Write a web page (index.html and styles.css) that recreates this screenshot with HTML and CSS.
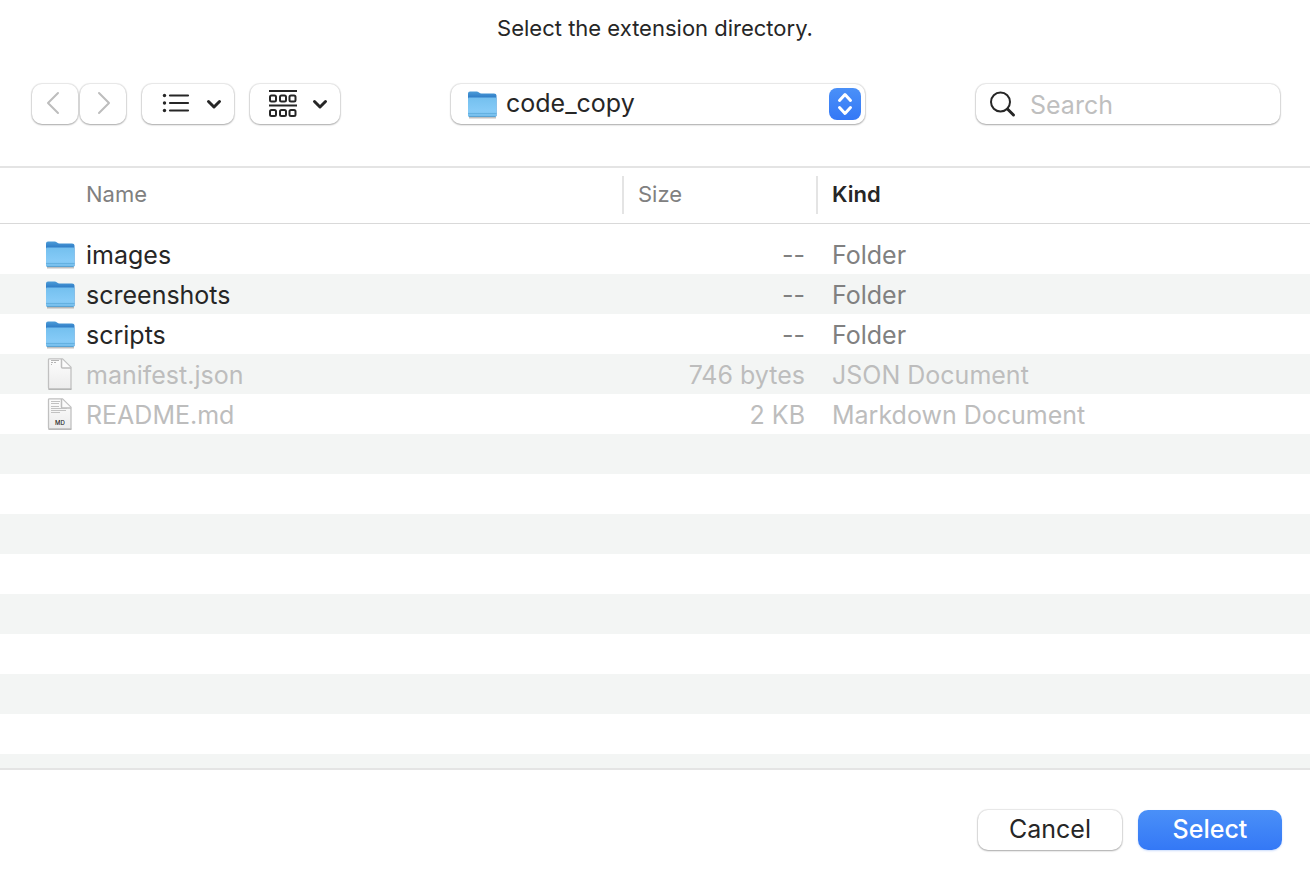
FILE: index.html
```html
<!DOCTYPE html>
<html lang="en">
<head>
<meta charset="utf-8">
<meta name="viewport" content="width=device-width, initial-scale=1">
<title>Select the extension directory.</title>
<link rel="stylesheet" href="styles.css">
</head>
<body>
<svg class="defs" aria-hidden="true">
  <defs>
    <linearGradient id="folder-back" x1="0" y1="0" x2="0" y2="1">
      <stop offset="0" stop-color="#4b9cd8"/><stop offset=".25" stop-color="#2f7cc6"/>
    </linearGradient>
    <linearGradient id="folder-front" x1="0" y1="0" x2="0" y2="1">
      <stop offset="0" stop-color="#74c0ef"/><stop offset=".7" stop-color="#86cbf7"/><stop offset="1" stop-color="#72bbe9"/>
    </linearGradient>
    <linearGradient id="paper" x1="0" y1="0" x2="0" y2="1">
      <stop offset="0" stop-color="#fdfdfd"/><stop offset="1" stop-color="#ececec"/>
    </linearGradient>
    <symbol id="folder" viewBox="0 0 32 32">
      <path d="M3 29.500h27" stroke="#000" stroke-opacity=".25" stroke-width="2"/>
      <path d="M2 5.500Q2 3.500 4 3.500h6.500q1.500 0 2.500 1t2.500 1h12.500q2.500 0 2.500 2V28H2z" fill="url(#folder-back)"/>
      <path d="M2 10.500Q2 9.500 3 9.500h26.500q1 0 1 1V27.500q0 1.500-1.500 1.500H3.500Q2 29 2 27.500z" fill="url(#folder-front)"/>
      <path d="M2 25.500h28.500" stroke="#64b1e1" stroke-width="1"/>
      <path d="M3 28.500h26.500" stroke="#5aa3d3" stroke-width="1"/>
    </symbol>
    <symbol id="page" viewBox="0 0 32 32">
      <path d="M4.500 31h23" stroke="#000" stroke-opacity=".4" stroke-width="1.500"/>
      <path d="M4.500 1.500Q4.500.8 5.500.8h13l8.500 8.500v20.500q0 1-1 1H5.500q-1 0-1-1z" fill="url(#paper)" stroke="#c0c0c0" stroke-width="1.300"/>
      <path d="M17.500 1v8q0 1 1 1H27" fill="#fbfbfb" stroke="#bdbdbd" stroke-width="1.500"/>
    </symbol>
  </defs>
</svg>
<main class="dialog">
  <h1 class="title">Select the extension directory.</h1>

  <div class="toolbar">
    <div class="tools">
      <div class="nav">
        <button class="control nav-button back" type="button" aria-label="Back" disabled>
          <svg width="14" height="24" viewBox="0 0 14 24"><path d="M12 2 2 12l10 10"/></svg>
        </button>
        <button class="control nav-button forward" type="button" aria-label="Forward" disabled>
          <svg width="14" height="24" viewBox="0 0 14 24"><path d="M2 2l10 10L2 22"/></svg>
        </button>
      </div>
      <button class="control menu-button" type="button" aria-label="View as list">
        <svg width="28" height="22" viewBox="0 0 28 22"><g fill="#262626"><circle cx="2.500" cy="2.500" r="1.700"/><circle cx="2.500" cy="10" r="1.700"/><circle cx="2.500" cy="17.500" r="1.700"/></g><path d="M8 2.500h18M8 10h18M8 17.500h18" stroke="#262626" stroke-width="2.200" stroke-linecap="round"/></svg>
        <svg class="caret" width="16" height="12" viewBox="0 0 16 12"><path d="M2.500 3.500 8 9 13.500 3.500"/></svg>
      </button>
      <button class="control menu-button group-button" type="button" aria-label="Group items">
        <svg width="30" height="30" viewBox="0 0 30 30" fill="none" stroke="#262626" stroke-width="2"><path d="M1 2h28M1 16.500h28"/><rect x="2" y="6.500" width="6" height="6" rx="1.500"/><rect x="12" y="6.500" width="6" height="6" rx="1.500"/><rect x="21.500" y="6.500" width="6" height="6" rx="1.500"/><rect x="2" y="21" width="6" height="6" rx="1.500"/><rect x="12" y="21" width="6" height="6" rx="1.500"/><rect x="21.500" y="21" width="6" height="6" rx="1.500"/></svg>
        <svg class="caret" width="16" height="12" viewBox="0 0 16 12"><path d="M2.500 3.500 8 9 13.500 3.500"/></svg>
      </button>
    </div>

    <div class="location">
      <svg class="location-icon" width="32" height="32" aria-hidden="true"><use href="#folder"/></svg>
      <select class="control location-select" aria-label="Current folder"><option>code_copy</option></select>
      <span class="stepper" aria-hidden="true">
        <svg width="32" height="32" viewBox="0 0 32 32"><path d="m10.500 12.500 5.500-6 5.500 6M10.500 19.500l5.500 6 5.500-6"/></svg>
      </span>
    </div>

    <label class="control search">
      <svg width="28" height="28" viewBox="0 0 28 28" aria-hidden="true"><circle cx="12.500" cy="12" r="9.500"/><path d="m19.500 19 6 6" stroke-width="3"/></svg>
      <input class="search-input" type="search" placeholder="Search" aria-label="Search">
    </label>
  </div>

  <div class="listing">
    <table class="files">
      <colgroup><col><col class="col-size"><col class="col-kind"></colgroup>
      <thead>
        <tr>
          <th scope="col"><span class="heading heading-name">Name</span></th>
          <th scope="col"><span class="heading divided">Size</span></th>
          <th scope="col" aria-sort="ascending"><span class="heading divided sorted">Kind</span></th>
        </tr>
      </thead>
      <tbody>
        <tr><td><span class="file"><svg width="32" height="32"><use href="#folder"/></svg>images</span></td><td class="size">--</td><td class="kind">Folder</td></tr>
        <tr><td><span class="file"><svg width="32" height="32"><use href="#folder"/></svg>screenshots</span></td><td class="size">--</td><td class="kind">Folder</td></tr>
        <tr><td><span class="file"><svg width="32" height="32"><use href="#folder"/></svg>scripts</span></td><td class="size">--</td><td class="kind">Folder</td></tr>
        <tr class="unavailable"><td><span class="file"><svg width="32" height="32"><use href="#page"/><path d="M7 2.500h8M7 4.500h2M10 4.500h2M7 6.500h1" stroke="#b5b5b5"/></svg>manifest.json</span></td><td class="size">746 bytes</td><td class="kind">JSON Document</td></tr>
        <tr class="unavailable"><td><span class="file"><svg width="32" height="32"><use href="#page"/><path d="M7 3.500h9M7 5.500h8M7 8.500h8M7 10.500h16M7 12.500h15M7 14.500h9" stroke="#c2c2c2"/><text class="badge" x="16" y="27" text-anchor="middle">MD</text></svg>README.md</span></td><td class="size">2 KB</td><td class="kind">Markdown Document</td></tr>
      </tbody>
    </table>
  </div>

  <div class="actions">
    <button class="control action" type="button">Cancel</button>
    <button class="control action primary" type="button">Select</button>
  </div>
</main>
</body>
</html>
```
FILE: styles.css
```css
* {
  box-sizing: border-box;
}

body {
  margin: 0;
  background: #fff;
  color: #262626;
  font-family: Inter, "Liberation Sans", sans-serif;
  font-size: 25px;
}

svg {
  flex: none;
}

.defs {
  position: absolute;
  width: 0;
  height: 0;
}

.dialog {
  display: flex;
  flex-direction: column;
  min-height: 100vh;
}

.title {
  margin: 0;
  padding-top: 14px;
  font-size: 22px;
  font-weight: 400;
  line-height: 28px;
  text-align: center;
}

.toolbar {
  display: flex;
  align-items: center;
  justify-content: space-between;
  gap: 16px;
  padding: 42px 30px 42px 32px;
}

.control {
  height: 40px;
  padding: 0;
  border: 0;
  border-radius: 10px;
  background: #fff;
  color: #262626;
  font: inherit;
  box-shadow: 0 0 1px 1px rgba(0, 0, 0, 0.09), 0 1px 2px rgba(0, 0, 0, 0.28);
}

.tools {
  display: flex;
  gap: 16px;
}

.nav {
  display: flex;
  gap: 2px;
}

.nav-button {
  display: flex;
  align-items: center;
  justify-content: center;
  width: 46px;
  padding-bottom: 2px;
  fill: none;
  stroke: #bdbdbd;
  stroke-width: 2;
  stroke-linecap: round;
  stroke-linejoin: round;
}

.back {
  padding-right: 4px;
}

.forward {
  padding-left: 2px;
}

.menu-button {
  display: flex;
  align-items: center;
  justify-content: space-between;
  width: 92px;
  padding: 0 12px 0 20px;
}

.group-button {
  width: 90px;
  padding-left: 18px;
}

.caret {
  fill: none;
  stroke: #262626;
  stroke-width: 3;
  stroke-linecap: round;
  stroke-linejoin: round;
}

.location {
  position: relative;
  flex: 0 1 414px;
}

.location-icon {
  position: absolute;
  top: 4px;
  left: 15px;
}

.location-select {
  display: block;
  width: 100%;
  padding: 0 44px 2px 55px;
  appearance: none;
}

.stepper {
  position: absolute;
  top: 4px;
  right: 4px;
  width: 32px;
  height: 32px;
  border-radius: 8px;
  background: linear-gradient(#4a90f8, #3478f6);
  pointer-events: none;
}

.stepper path {
  fill: none;
  stroke: #fff;
  stroke-width: 3;
  stroke-linecap: round;
  stroke-linejoin: round;
}

.search {
  display: flex;
  align-items: center;
  gap: 14px;
  flex: 0 1 304px;
  min-width: 0;
  padding: 0 12px;
}

.search svg {
  fill: none;
  stroke: #262626;
  stroke-width: 2;
  stroke-linecap: round;
}

.search-input {
  width: 100%;
  min-width: 0;
  padding: 2px 0 0;
  border: 0;
  outline: 0;
  background: none;
  color: inherit;
  font: inherit;
}

.search-input::placeholder {
  color: #bfbfbf;
}

.listing {
  flex: 1;
  border-top: 2px solid #e4e4e4;
  border-bottom: 2px solid #e4e4e4;
  background: repeating-linear-gradient(#fff 0 40px, #f3f5f4 40px 80px) 0 66px no-repeat;
}

.files {
  width: 100%;
  table-layout: fixed;
  border-collapse: separate;
  border-spacing: 0;
}

.col-size {
  width: 194px;
}

.col-kind {
  width: 494px;
}

th {
  height: 56px;
  padding: 0 0 2px;
  border-bottom: 1px solid #d9d9d9;
  color: #808080;
  font-size: 22px;
  font-weight: 400;
  text-align: left;
}

.heading {
  display: block;
  padding-bottom: 2px;
  line-height: 36px;
}

.heading-name {
  padding-left: 86px;
}

.divided {
  padding-left: 14px;
  border-left: 2px solid #e4e4e4;
}

.sorted {
  color: #262626;
  font-weight: 600;
}

tbody::before {
  content: "";
  display: table-row;
  height: 10px;
}

td {
  height: 40px;
  padding: 2px 0 0;
  line-height: 38px;
  white-space: nowrap;
}

.file {
  display: flex;
  align-items: center;
  gap: 10px;
  padding-left: 44px;
}

.file svg {
  margin-bottom: 2px;
}

.size {
  padding-right: 11px;
  color: #808080;
  text-align: right;
}

.kind {
  padding-left: 16px;
  color: #808080;
}

.unavailable td {
  color: #bdbdbd;
}

.badge {
  fill: #262626;
  font-size: 6px;
  font-weight: 500;
}

.actions {
  display: flex;
  justify-content: flex-end;
  gap: 16px;
  padding: 40px 28px 30px;
}

.action {
  width: 144px;
  padding-bottom: 2px;
}

.primary {
  background: linear-gradient(#4a90f8, #3478f6);
  color: #fff;
  font-weight: 500;
  box-shadow: 0 1px 2px rgba(52, 120, 246, 0.25);
}
```
